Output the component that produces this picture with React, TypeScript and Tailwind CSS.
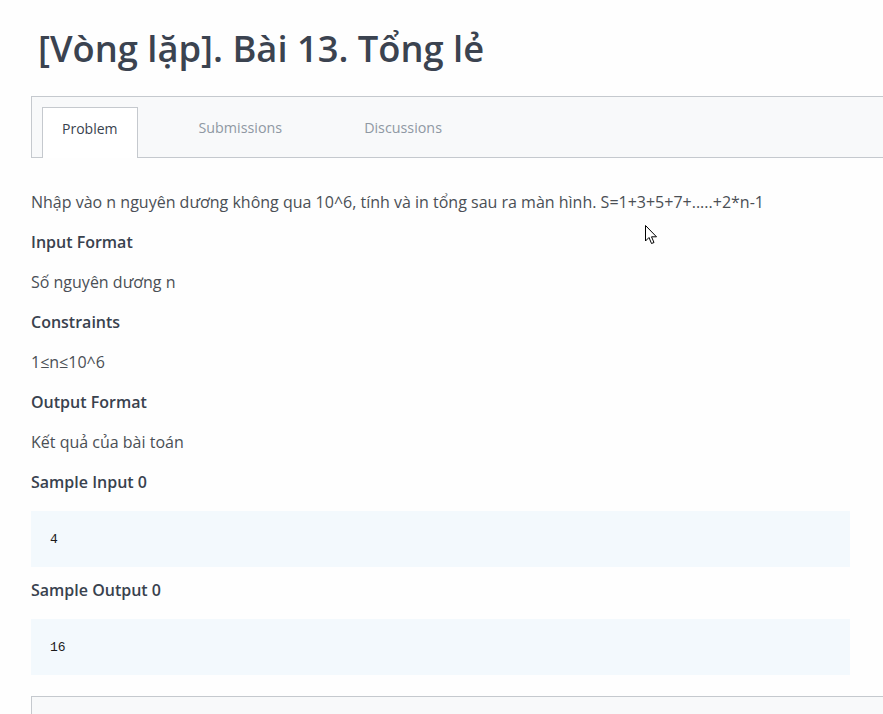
import React from 'react';

const tabs = [
  { label: 'Problem', active: true },
  { label: 'Submissions', active: false },
  { label: 'Discussions', active: false },
];

const sections = [
  { title: 'Input Format', body: 'Số nguyên dương n' },
  { title: 'Constraints', body: '1≤n≤10^6' },
  { title: 'Output Format', body: 'Kết quả của bài toán' },
];

const CodeBlock: React.FC<{ value: string }> = ({ value }) => (
  <div className="w-[819px] h-[56px] bg-[#f3f9fd] flex items-center pl-[19px] pt-[2px]">
    <pre className="text-[13px] text-[#1b1b1b]" style={{ fontFamily: '"Liberation Mono", monospace' }}>
      {value}
    </pre>
  </div>
);

const App: React.FC = () => {
  return (
    <div
      className="relative w-[883px] h-[714px] overflow-hidden bg-[#fefefe] text-[#39424e]"
      style={{ fontFamily: '"Open Sans", sans-serif' }}
    >
      <h1 className="pl-[38px] pt-[24px] text-[36.3px] leading-[48px] font-semibold text-[#3b4350]">
        [Vòng lặp]. Bài 13. Tổng lẻ
      </h1>

      <div className="ml-[31px] mt-[24px] w-[900px] h-[62px] border border-[#c5c9ce] bg-[#f8f9fa] flex items-end">
        {tabs.map((tab, i) =>
          tab.active ? (
            <div
              key={tab.label}
              className="ml-[10px] h-[51px] mb-[-1px] px-[19px] pb-[9px] bg-white border border-b-0 border-[#c5c9ce] flex items-center text-[14px] text-[#39424e]"
            >
              {tab.label}
            </div>
          ) : (
            <div
              key={tab.label}
              className={`h-[50px] pb-[9px] flex items-center text-[14.3px] text-[#8f98a3] ${i === 1 ? 'ml-[61px]' : 'ml-[82px]'}`}
            >
              {tab.label}
            </div>
          ),
        )}
      </div>

      <div className="pl-[31px] pt-[32px] text-[16px] leading-[24px]">
        <p className="text-[#4a4f55]">
          Nhập vào n nguyên dương không qua 10^6, tính và in tổng sau ra màn hình. S=1+3+5+7+.....+2*n-1
        </p>
        {sections.map((s) => (
          <div key={s.title}>
            <h3 className="mt-[16px] font-semibold text-[#39424e]">{s.title}</h3>
            <p className="mt-[16px] text-[#4a4f55]">{s.body}</p>
          </div>
        ))}
        <h3 className="mt-[16px] font-semibold text-[#39424e]">Sample Input 0</h3>
        <div className="mt-[17px]">
          <CodeBlock value="4" />
        </div>
        <h3 className="mt-[11px] font-semibold text-[#39424e]">Sample Output 0</h3>
        <div className="mt-[17px]">
          <CodeBlock value="16" />
        </div>
        <div className="mt-[21px] w-[900px] h-[40px] border border-[#c5c9ce] bg-[#f8f9fa]" />
      </div>

      <svg className="absolute left-[645px] top-[225px]" width="13" height="21" viewBox="0 0 13 21">
        <path
          d="M0.5 0.5 L0.5 16 L4 12.5 L6.5 18.5 L9 17.5 L6.5 11.8 L11.5 11.8 Z"
          fill="#fff"
          stroke="#000"
          strokeWidth="1"
          strokeLinejoin="round"
        />
      </svg>
    </div>
  );
};

export default App;
